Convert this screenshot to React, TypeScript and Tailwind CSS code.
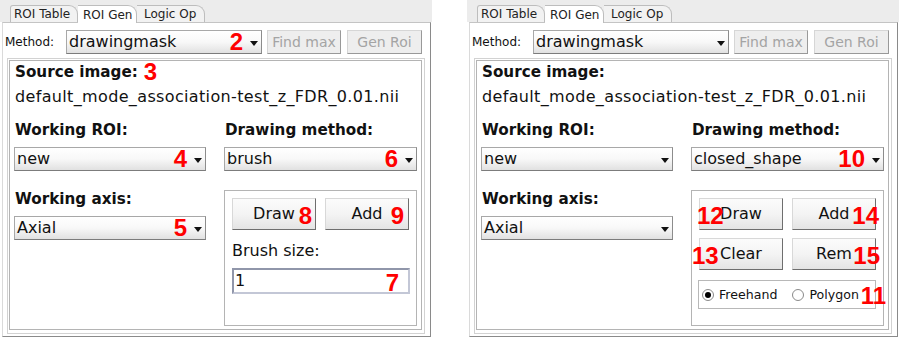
import React from 'react';

// Two side-by-side ROI Gen panels (brush vs closed_shape), with red callout numbers

const Num = ({ children, className = '' }: { children: React.ReactNode; className?: string }) => (
  <span
    className={`font-['Liberation_Sans',Arial,sans-serif] font-bold text-[24px] leading-none text-[#ff0000] ${className}`}
  >
    {children}
  </span>
);

const Arrow = () => (
  <svg width="8" height="5" viewBox="0 0 8 5" className="shrink-0 mt-[2px]">
    <path d="M0 0H8L4 5Z" fill="#111" />
  </svg>
);

const Combo = ({ value, num }: { value: string; num?: string }) => (
  <div className="flex h-[24px] w-full items-center border border-[#a8a8a8] border-b-[#7c7c7c] border-r-[#8c8c8c] bg-gradient-to-b from-white via-[#f8f8f8] to-[#e1e1e1] pl-[2px] pr-[3px]">
    <span className="flex-1 text-[16px] leading-[20px] text-[#111]">{value}</span>
    {num && <Num className="mr-[7px]">{num}</Num>}
    <Arrow />
  </div>
);

const Button = ({ label, num, numClass = '' }: { label: string; num?: string; numClass?: string }) => (
  <div className="relative flex h-[32px] w-[84px] items-center justify-center border border-[#d8d8d8] border-b-[#6e6e6e] border-r-[#6e6e6e] bg-gradient-to-b from-[#fbfbfb] via-[#f4f4f4] to-[#e4e4e4] text-[16px] text-[#111]">
    {label}
    {num && <Num className={`absolute top-[5px] ${numClass}`}>{num}</Num>}
  </div>
);

const DisabledButton = ({ label, w }: { label: string; w: string }) => (
  <div
    className={`flex h-[24px] ${w} items-center justify-center border border-[#d6d6d6] border-b-[#999] border-r-[#999] bg-[#eeeeee] text-[14px] text-[#a4a4a4]`}
  >
    {label}
  </div>
);

const Radio = ({ label, checked }: { label: string; checked?: boolean }) => (
  <div className="flex items-center gap-[5px]">
    <span className="flex h-[12px] w-[12px] items-center justify-center rounded-full border border-[#8a8a8a] bg-white">
      {checked && <span className="h-[6px] w-[6px] rounded-full bg-black" />}
    </span>
    <span className="text-[12.6px] leading-[16px] text-[#111]">{label}</span>
  </div>
);

const Label = ({ children }: { children: React.ReactNode }) => (
  <div className="h-[20px] pl-px text-[15.2px] font-bold leading-[20px] text-[#111]">{children}</div>
);

const Tabs = () => (
  <div className="flex h-[22px] items-end bg-[#ececec] pl-[10px]">
    <div className="flex h-[17px] w-[68px] items-center rounded-tl-[3px] rounded-tr-[9px] border-l border-r border-t border-[#bdbdbd] bg-[#f2f2f2] pl-[3px] text-[12px] text-[#222]">
      ROI Table
    </div>
    <div className="relative -mb-px flex h-[18px] w-[59px] items-center rounded-tr-[9px] border-r border-t border-[#bdbdbd] bg-white pl-[5px] text-[12px] text-[#222]">
      ROI Gen
    </div>
    <div className="flex h-[17px] w-[68px] items-center rounded-tr-[9px] border-r border-t border-[#bdbdbd] bg-[#f2f2f2] pl-[7px] text-[12px] text-[#222]">
      Logic Op
    </div>
  </div>
);

const Panel = ({ closed }: { closed?: boolean }) => (
  <div className="flex h-[339px] w-[432px] flex-col">
    <Tabs />
    <div className="ml-[2px] flex h-[315px] w-[429px] flex-col border-b border-l border-r border-t border-[#dadada] border-b-[#8a8a8a] border-r-[#8a8a8a] border-t-[#c4c4c4] bg-white pt-[7px]">
      {/* method row */}
      <div className="flex h-[24px] items-center gap-[5px] pl-[2px]">
        <span className="w-[56px] text-[12px] text-[#111]">Method:</span>
        <div className="w-[196px]">
          <Combo value="drawingmask" num={closed ? undefined : '2'} />
        </div>
        <DisabledButton label="Find max" w="w-[74px]" />
        <DisabledButton label="Gen Roi" w="w-[75px] ml-px" />
      </div>

      {/* etched frame */}
      <div className="mb-[2px] ml-[4px] mr-[5px] mt-[4px] flex-1 border border-[#d2d2d2] pb-[3px] pl-px pr-[2px] pt-px">
        <div className="h-full border border-[#b4b4b4] px-[4px] pt-px">
          <div className="flex h-[20px] items-center pl-px">
            <span className="text-[15.2px] font-bold leading-[20px] text-[#111]">Source image:</span>
            {!closed && <Num className="ml-[6px]">3</Num>}
          </div>
          <div className="mt-[5px] h-[20px] pl-px text-[16px] leading-[20px] tracking-[0.35px] text-[#111]">
            default_mode_association-test_z_FDR_0.01.nii
          </div>

          <div className="mt-[13px] flex gap-[18px]">
            <div className="flex w-[192px] flex-col">
              <Label>Working ROI:</Label>
              <div className="mt-[7px]">
                <Combo value="new" num={closed ? undefined : '4'} />
              </div>
              <div className="mt-[18px]">
                <Label>Working axis:</Label>
              </div>
              <div className="mt-[7px]">
                <Combo value="Axial" num={closed ? undefined : '5'} />
              </div>
            </div>

            <div className="flex w-[193px] flex-col">
              <Label>Drawing method:</Label>
              <div className="mt-[7px]">
                <Combo value={closed ? 'closed_shape' : 'brush'} num={closed ? '10' : '6'} />
              </div>

              <div className="mt-[19px] h-[136px] border border-[#b4b4b4] pl-[7px] pt-[7px]">
                {closed ? (
                  <>
                    <div className="flex gap-[9px]">
                      <Button label="Draw" num="12" numClass="left-[-3px]" />
                      <Button label="Add" num="14" numClass="right-[-4px]" />
                    </div>
                    <div className="mt-[8px] flex gap-[9px]">
                      <Button label="Clear" num="13" numClass="left-[-8px]" />
                      <Button label="Rem" num="15" numClass="right-[-5px]" />
                    </div>
                    <div className="relative -ml-px mt-[10px] flex h-[29px] w-[178px] items-center gap-[15px] border border-[#b8b8b8] pl-[3px]">
                      <Radio label="Freehand" checked />
                      <Radio label="Polygon" />
                      <Num className="absolute right-[-11px] top-[3px]">11</Num>
                    </div>
                  </>
                ) : (
                  <>
                    <div className="flex gap-[9px]">
                      <Button label="Draw" num="8" numClass="right-[3px]" />
                      <Button label="Add" num="9" numClass="right-[4px]" />
                    </div>
                    <div className="mt-[11px] h-[20px] text-[16px] leading-[20px] text-[#111]">Brush size:</div>
                    <div className="relative mt-[7px] flex h-[26px] w-[178px] items-center border-2 border-[#9096aa] border-b-[#c3c7d6] border-r-[#c3c7d6] bg-white pl-px text-[16px] text-[#111]">
                      1
                      <Num className="absolute right-[9px] top-[1px]">7</Num>
                    </div>
                  </>
                )}
              </div>
            </div>
          </div>
        </div>
      </div>
    </div>
  </div>
);

export default function App() {
  return (
    <div className="flex h-[339px] w-[900px] gap-[35px] overflow-hidden bg-white font-['DejaVu_Sans',sans-serif]">
      <Panel />
      <Panel closed />
    </div>
  );
}
